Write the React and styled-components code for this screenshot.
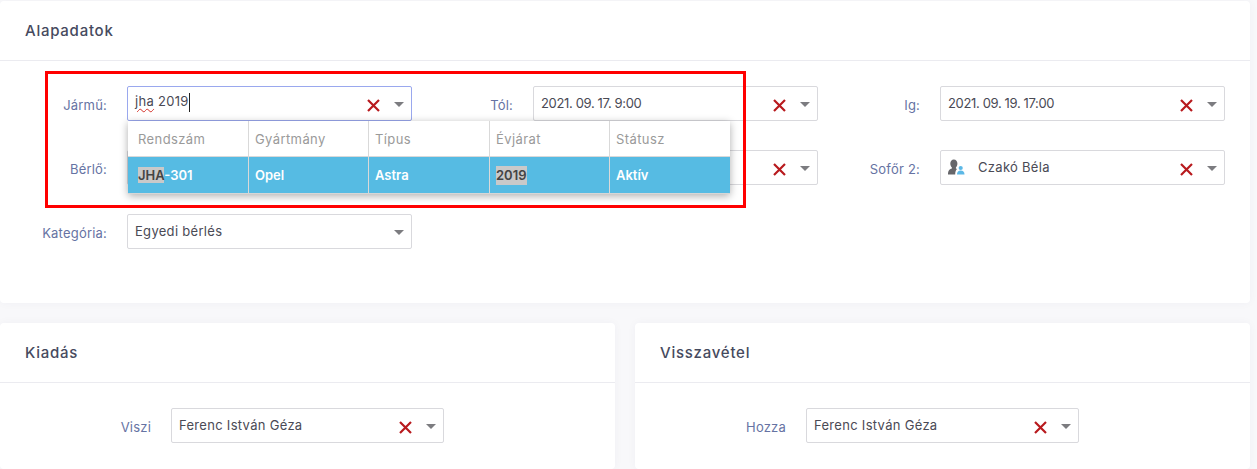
import React from 'react';
import styled, { createGlobalStyle } from 'styled-components';

const GlobalStyle = createGlobalStyle`
  html, body {
    margin: 0;
    padding: 0;
    height: 100%;
    background: #f8f8fa;
    overflow: hidden;
    font-family: Inter, "Open Sans", sans-serif;
  }
  * { box-sizing: border-box; }
`;

const Page = styled.div`
  position: relative;
  width: 1257px;
  height: 469px;
  padding: 1px 7px 0 0;
  display: flex;
  flex-direction: column;
  gap: 20px;
`;

const Card = styled.section`
  background: #fff;
  border-radius: 4px;
  box-shadow: 0 0 10px rgba(60, 60, 90, 0.04);
  flex: ${props => (props.$grow ? 1 : 'none')};
  height: ${props => props.$height || 'auto'};
`;

const CardHeader = styled.header`
  height: 60px;
  padding: 0 25px 1px;
  display: flex;
  align-items: center;
  border-bottom: 1px solid #ebebf0;
  font-size: 15px;
  font-weight: 500;
  letter-spacing: 0.75px;
  color: #464a5e;
`;

const FormGrid = styled.div`
  display: grid;
  grid-template-columns: 406px 407px 406px;
  row-gap: 29px;
  padding: 25px 0 0 5px;
`;

const Field = styled.div`
  display: grid;
  grid-template-columns: ${props => props.$labelWidth || '102px'} ${props => props.$selectWidth || '285px'};
  column-gap: 20px;
  align-items: center;
`;

const Label = styled.label`
  text-align: right;
  font-size: 13px;
  letter-spacing: 0.2px;
  color: #6673a3;
  padding-top: 2px;
`;

const SelectBox = styled.div`
  height: 35px;
  display: flex;
  align-items: center;
  padding: 0 7px 0 7px;
  background: #fff;
  border: 1px solid ${props => (props.$focused ? '#9aa8ee' : '#d9d9dd')};
  border-radius: 2px;
  font-size: 13px;
  letter-spacing: ${props => (props.$compact ? '-0.35px' : '0.3px')};
  color: #4a4a55;
`;

const Value = styled.div`
  flex: 1;
  display: flex;
  align-items: center;
  gap: 13px;
  padding-bottom: 2px;
  white-space: nowrap;
`;

const Squiggle = styled.span`
  text-decoration: underline wavy #d4312a 1px;
  text-underline-offset: 2px;
`;

const TextCaret = styled.span`
  display: inline-block;
  width: 1px;
  height: 19px;
  margin-left: 0;
  vertical-align: middle;
  background: #222;
`;

const ClearIcon = styled.svg`
  width: 13px;
  height: 13px;
  margin: 4px 14px 0 0;
  flex: none;
  stroke: #b81a1e;
  stroke-width: 2.2;
  fill: none;
`;

const Caret = styled.span`
  width: 0;
  height: 0;
  flex: none;
  margin: 1px 0 0;
  border-left: 5px solid transparent;
  border-right: 5px solid transparent;
  border-top: 5px solid #7c7c80;
`;

const Dropdown = styled.div`
  position: absolute;
  left: 128px;
  top: 121px;
  width: 602px;
  background: #fff;
  box-shadow: 0 2px 8px rgba(0, 0, 0, 0.32);
  border-bottom: 1px solid #d6d6d6;
`;

const DropRow = styled.div`
  display: grid;
  grid-template-columns: 120px 120px 121px 120px 121px;
  height: 36px;
  background: ${props => (props.$head ? '#fff' : '#56bbe3')};
  border-bottom: ${props => (props.$head ? '1px solid #d9d9d9' : 'none')};
`;

const DropCell = styled.div`
  display: flex;
  align-items: center;
  padding-left: ${props => (props.$first ? '10px' : '6px')};
  border-left: ${props => (props.$first ? 'none' : '1px solid #d9d9d9')};
  font-size: 13px;
  letter-spacing: ${props => (props.$head ? '0.4px' : '0')};
  font-weight: ${props => (props.$head ? 400 : 600)};
  color: ${props => (props.$head ? '#9a9a9a' : '#fff')};
`;

const Match = styled.mark`
  background: #c9c9c9;
  color: #444;
  line-height: 19px;
`;

const Bottom = styled.div`
  flex: 1;
  display: grid;
  grid-template-columns: 615px 615px;
  column-gap: 20px;
`;

const SingleField = styled.div`
  padding: 25px 0 0;
`;

const Highlight = styled.div`
  position: absolute;
  left: 45px;
  top: 71px;
  width: 701px;
  height: 137px;
  border: 3px solid #ff0000;
  pointer-events: none;
`;

const Clear = () => (
  <ClearIcon viewBox="0 0 13 13">
    <path d="M1 1 L12 12 M12 1 L1 12" />
  </ClearIcon>
);

const DriverIcon = () => (
  <svg width="17" height="16" viewBox="0 0 17 16" style={{ flex: 'none' }}>
    <path fill="#66666a" d="M5.800 .5c2.200 0 3.600 1.700 3.600 4 0 1.600-.6 3-1.500 3.900v1c.4.200.8.300 1.100.5C7.800 11 7.200 12.800 7.200 15.500H0c0-3.700 1.100-5.200 3.900-6.100v-1C3 7.500 2.300 6.100 2.300 4.500c0-2.300 1.400-4 3.500-4z" />
    <circle fill="#5cb8e6" cx="12.700" cy="9" r="2.100" />
    <path fill="#5cb8e6" d="M9 15.500c0-2.500 1.400-3.900 3.700-3.900s3.800 1.400 3.800 3.900z" />
  </svg>
);

const Select = ({ children, focused, compact, clearable = true }) => (
  <SelectBox $focused={focused} $compact={compact}>
    <Value>{children}</Value>
    {clearable && <Clear />}
    <Caret />
  </SelectBox>
);

const columns = ['Rendszám', 'Gyártmány', 'Típus', 'Évjárat', 'Státusz'];

const App = () => (
  <Page>
    <GlobalStyle />
    <Card $height="302px">
      <CardHeader>Alapadatok</CardHeader>
      <FormGrid>
        <Field>
          <Label>Jármű:</Label>
          <Select focused>
            <span><Squiggle>jha</Squiggle> 2019<TextCaret /></span>
          </Select>
        </Field>
        <Field>
          <Label>Tól:</Label>
          <Select compact>2021. 09. 17. 9:00</Select>
        </Field>
        <Field>
          <Label>Ig:</Label>
          <Select compact>2021. 09. 19. 17:00</Select>
        </Field>
        <Field>
          <Label>Bérlő:</Label>
          <Select />
        </Field>
        <Field>
          <Label />
          <Select />
        </Field>
        <Field>
          <Label>Sofőr 2:</Label>
          <Select>
            <DriverIcon />
            <span>Czakó Béla</span>
          </Select>
        </Field>
        <Field>
          <Label>Kategória:</Label>
          <Select clearable={false}>Egyedi bérlés</Select>
        </Field>
      </FormGrid>
    </Card>
    <Bottom>
      <Card>
        <CardHeader>Kiadás</CardHeader>
        <SingleField>
          <Field $labelWidth="151px" $selectWidth="273px">
            <Label>Viszi</Label>
            <Select>Ferenc István Géza</Select>
          </Field>
        </SingleField>
      </Card>
      <Card>
        <CardHeader>Visszavétel</CardHeader>
        <SingleField>
          <Field $labelWidth="151px" $selectWidth="273px">
            <Label>Hozza</Label>
            <Select>Ferenc István Géza</Select>
          </Field>
        </SingleField>
      </Card>
    </Bottom>
    <Dropdown>
      <DropRow $head>
        {columns.map((c, i) => (
          <DropCell key={c} $head $first={i === 0}>{c}</DropCell>
        ))}
      </DropRow>
      <DropRow>
        <DropCell $first><span><Match>JHA</Match>-301</span></DropCell>
        <DropCell>Opel</DropCell>
        <DropCell>Astra</DropCell>
        <DropCell><Match>2019</Match></DropCell>
        <DropCell>Aktív</DropCell>
      </DropRow>
    </Dropdown>
    <Highlight />
  </Page>
);

export default App;
